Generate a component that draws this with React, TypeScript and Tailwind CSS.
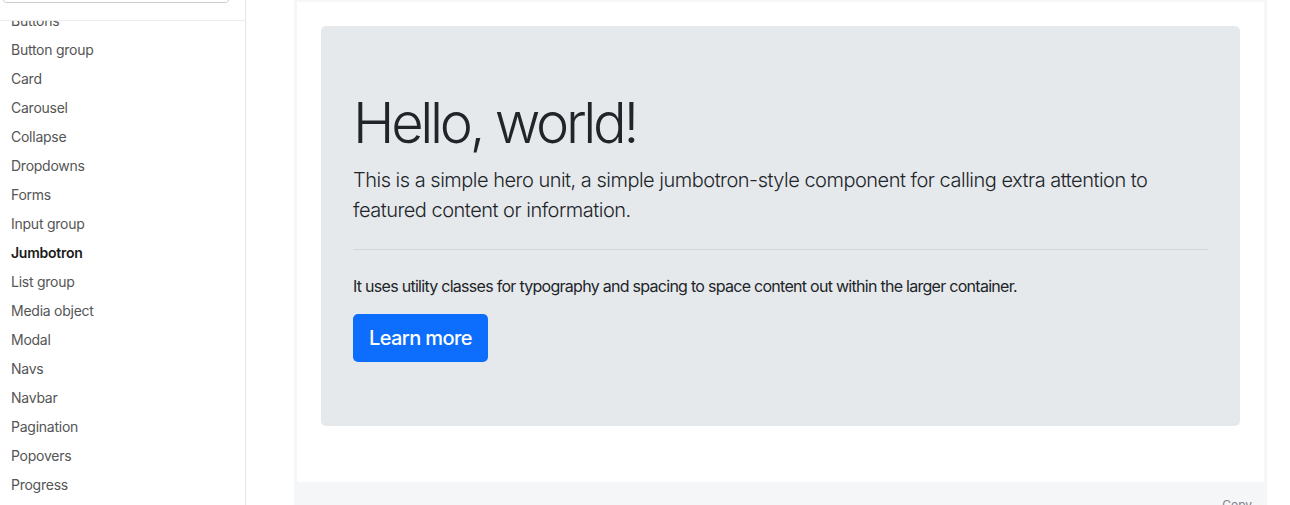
import React from 'react';

const navItems = [
  'Buttons',
  'Button group',
  'Card',
  'Carousel',
  'Collapse',
  'Dropdowns',
  'Forms',
  'Input group',
  'Jumbotron',
  'List group',
  'Media object',
  'Modal',
  'Navs',
  'Navbar',
  'Pagination',
  'Popovers',
  'Progress',
  'Scrollspy',
];

function Sidebar() {
  return (
    <aside className="w-[246px] shrink-0 h-[505px] border-r border-[#e5e5e5] flex flex-col overflow-hidden">
      <div className="h-[21px] shrink-0 border-b border-[#ececec] overflow-hidden bg-white relative z-10">
        <div className="ml-[2px] w-[228px] h-[38px] -mt-[35px] rounded-[5px] border border-[#cfcfcf] bg-white" />
      </div>
      <nav className="flex-1 overflow-hidden">
        <ul className="-mt-[15px]">
          {navItems.map((item) => (
            <li
              key={item}
              className={`h-[29px] flex items-center pl-[11px] text-[14px] tracking-[-0.25px] ${
                item === 'Jumbotron' ? 'font-semibold text-[#1b1b1b]' : 'text-[#555]'
              }`}
            >
              {item}
            </li>
          ))}
        </ul>
      </nav>
    </aside>
  );
}

function Jumbotron() {
  return (
    <div className="bg-[#e6e9ec] rounded-[5px] px-[32px] py-[64px] mb-[32px] text-[#212529]">
      <h1 className="text-[56px] leading-[1.2] font-light tracking-[-3.3px] mb-[8px]">Hello, world!</h1>
      <p className="text-[20px] leading-[30px] font-light tracking-[-0.5px] mb-[16px]">
        This is a simple hero unit, a simple jumbotron-style component for calling extra attention to featured
        content or information.
      </p>
      <hr className="my-[24px] border-0 border-t border-[#d2d5d8]" />
      <p className="text-[16px] leading-[24px] mb-[16px] tracking-[-0.72px]">
        It uses utility classes for typography and spacing to space content out within the larger container.
      </p>
      <button className="h-[48px] px-[16px] rounded-[5px] bg-[#0d6efd] text-white text-[20px] leading-[30px] font-medium tracking-[-0.6px]">
        Learn more
      </button>
    </div>
  );
}

export default function App() {
  return (
    <div className="w-[1290px] h-[505px] overflow-hidden bg-white flex font-['Inter','Noto_Sans',sans-serif]">
      <Sidebar />
      <main className="flex-1 pl-[48px]">
        <div className="w-[973px]">
          <div className="-mt-px border-[3px] border-[#f5f6f8] px-[24px] pt-[24px] pb-[24px]">
            <Jumbotron />
          </div>
          <div className="bg-[#f5f6f8] h-[60px] flex justify-end pr-[15px] pt-[12px]">
            <span className="text-[12px] leading-[16px] text-[#7d848a]">Copy</span>
          </div>
        </div>
      </main>
    </div>
  );
}
